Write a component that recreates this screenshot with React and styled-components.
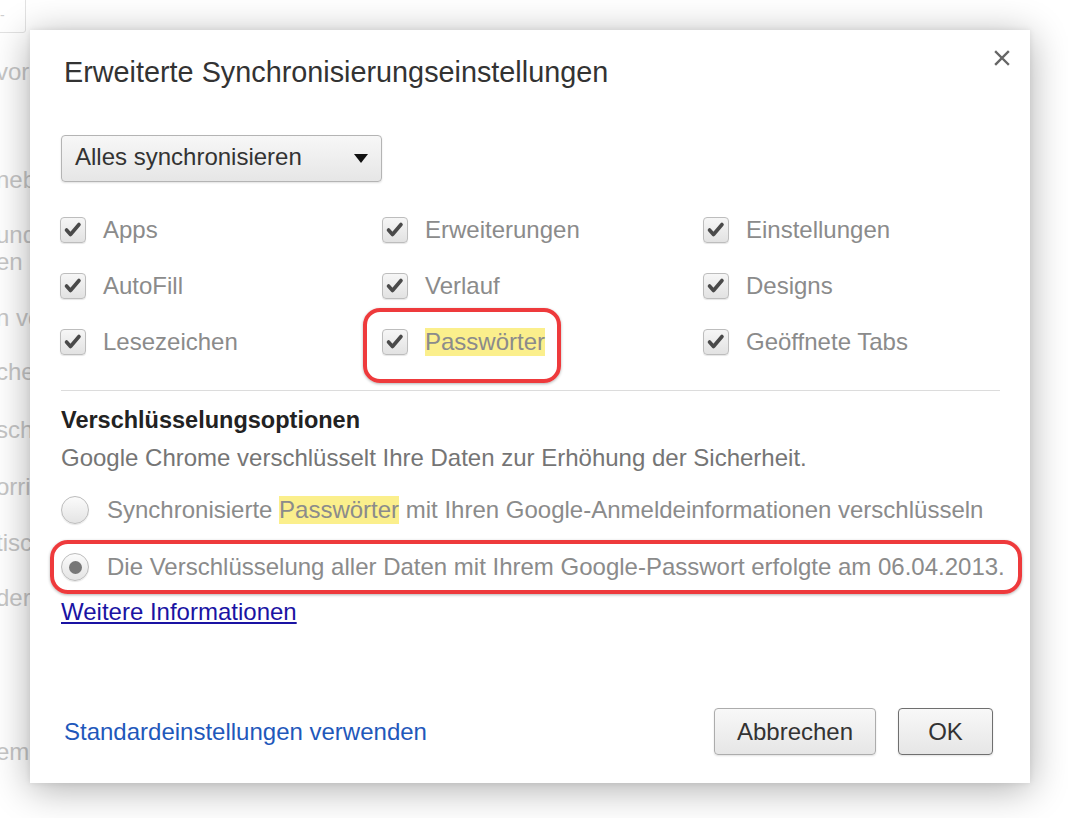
import React from "react";
import styled, { createGlobalStyle } from "styled-components";

const GlobalStyle = createGlobalStyle`
  html, body {
    margin: 0;
    padding: 0;
    background: #ffffff;
  }
  body {
    font-family: "Liberation Sans", Arial, sans-serif;
  }
`;

const backdropLines = [
  { text: "vor", gap: 58 },
  { text: "neb", gap: 80 },
  { text: "und", gap: 27 },
  { text: "en", gap: -1 },
  { text: "n vo", gap: 28 },
  { text: "che", gap: 26 },
  { text: "sch", gap: 30 },
  { text: "orri", gap: 29 },
  { text: "tisc", gap: 28 },
  { text: "deru", gap: 27 },
  { text: "em", gap: 126 },
];

const options = [
  "Apps",
  "Erweiterungen",
  "Einstellungen",
  "AutoFill",
  "Verlauf",
  "Designs",
  "Lesezeichen",
  "Passwörter",
  "Geöffnete Tabs",
];

export default function App() {
  return (
    <>
      <GlobalStyle />
      <Page>
        <Backdrop>
          <SearchStub>-</SearchStub>
          {backdropLines.map((line, i) => (
            <FadedLine key={i} $gap={line.gap}>
              {line.text}
            </FadedLine>
          ))}
        </Backdrop>

        <Dialog>
          <CloseButton aria-label="Schließen">
            <svg width="16" height="16" viewBox="0 0 16 16">
              <path
                d="M2 2 L14 14 M14 2 L2 14"
                stroke="#666"
                strokeWidth="2.4"
                strokeLinecap="square"
              />
            </svg>
          </CloseButton>

          <Title>Erweiterte Synchronisierungseinstellungen</Title>

          <Select>
            <span>Alles synchronisieren</span>
            <Caret />
          </Select>

          <OptionGrid>
            {options.map((name) => (
              <Option key={name} $marked={name === "Passwörter"}>
                <CheckBox>
                  <svg width="26" height="26" viewBox="0 0 26 26">
                    <polyline
                      points="6.5,13 10.5,17.5 19,7.5"
                      fill="none"
                      stroke="#4a4a4a"
                      strokeWidth="3.6"
                      strokeLinecap="round"
                      strokeLinejoin="round"
                    />
                  </svg>
                </CheckBox>
                <Label>
                  {name === "Passwörter" ? <Mark>{name}</Mark> : name}
                </Label>
              </Option>
            ))}
          </OptionGrid>

          <Divider />

          <SectionTitle>Verschlüsselungsoptionen</SectionTitle>
          <Description>
            Google Chrome verschlüsselt Ihre Daten zur Erhöhung der Sicherheit.
          </Description>

          <RadioRow>
            <Radio />
            <Label>
              Synchronisierte <Mark>Passwörter</Mark> mit Ihren
              Google-Anmeldeinformationen verschlüsseln
            </Label>
          </RadioRow>
          <RadioRow $marked>
            <Radio $checked />
            <Label>
              Die Verschlüsselung aller Daten mit Ihrem Google-Passwort erfolgte
              am 06.04.2013.
            </Label>
          </RadioRow>

          <MoreLink href="#">Weitere Informationen</MoreLink>

          <Footer>
            <ResetLink href="#">Standardeinstellungen verwenden</ResetLink>
            <Buttons>
              <Button $width={162}>Abbrechen</Button>
              <Button $width={95} $default>
                OK
              </Button>
            </Buttons>
          </Footer>
        </Dialog>
      </Page>
    </>
  );
}

const Page = styled.div`
  position: relative;
  width: 100vw;
  height: 100vh;
  overflow: hidden;
  background: #ffffff;
`;

const Backdrop = styled.div`
  display: flex;
  flex-direction: column;
  font-size: 24px;
  color: #c6c6c6;
`;

const SearchStub = styled.div`
  position: absolute;
  top: -1px;
  left: -1px;
  width: 25px;
  height: 32px;
  border: 1px solid #e2e2e2;
  border-radius: 0 0 3px 0;
  font-size: 14px;
  line-height: 30px;
  color: #cfcfcf;
`;

const FadedLine = styled.div`
  margin-top: ${(p) => p.$gap}px;
  margin-left: -4px;
  line-height: 28px;
  white-space: nowrap;
`;

const Dialog = styled.div`
  position: absolute;
  top: 30px;
  left: 30px;
  width: 1000px;
  height: 753px;
  box-sizing: border-box;
  padding: 26px 30px 28px 31px;
  display: flex;
  flex-direction: column;
  background: #ffffff;
  box-shadow: 0 6px 36px rgba(0, 0, 0, 0.32), 0 0 6px rgba(0, 0, 0, 0.08);
`;

const CloseButton = styled.div`
  position: absolute;
  top: 20px;
  right: 20px;
  width: 16px;
  height: 16px;
  svg {
    display: block;
  }
`;

const Title = styled.h1`
  margin: 0 0 0 3px;
  font-size: 28.8px;
  line-height: 32px;
  font-weight: normal;
  color: #333333;
`;

const Select = styled.div`
  margin-top: 47px;
  width: 321px;
  height: 47px;
  box-sizing: border-box;
  padding: 0 13px 3px 13px;
  display: flex;
  align-items: center;
  justify-content: space-between;
  border: 1px solid #b4b4b4;
  border-radius: 4px;
  background: linear-gradient(#f7f7f7, #e6e6e6);
  box-shadow: 0 1px 2px rgba(0, 0, 0, 0.12);
  font-size: 24px;
  line-height: 28px;
  color: #333333;
`;

const Caret = styled.div`
  margin-top: 2px;
  width: 0;
  height: 0;
  border-left: 7.5px solid transparent;
  border-right: 7.5px solid transparent;
  border-top: 9px solid #111111;
`;

const OptionGrid = styled.div`
  margin-top: 20px;
  display: grid;
  grid-template-columns: 322px 321px 1fr;
  grid-auto-rows: 56px;
`;

const Option = styled.div`
  position: relative;
  display: flex;
  align-items: center;
  gap: 17px;

  ${(p) =>
    p.$marked &&
    `
    &::after {
      content: "";
      position: absolute;
      top: -6px;
      bottom: -13px;
      left: -20px;
      width: 198px;
      border: 4px solid #ee3a3c;
      border-radius: 17px;
      box-sizing: border-box;
      box-shadow: 0 1px 3px rgba(0, 0, 0, 0.3);
    }
  `}
`;

const CheckBox = styled.div`
  width: 26px;
  height: 26px;
  box-sizing: border-box;
  flex-shrink: 0;
  margin-left: -1px;
  border: 1px solid #bdbdbd;
  border-radius: 4px;
  background: linear-gradient(#f6f6f6, #e2e2e2);
  box-shadow: 0 1px 1px rgba(0, 0, 0, 0.1);
  svg {
    display: block;
    margin: -1px;
  }
`;

const Label = styled.span`
  font-size: 24px;
  line-height: 28px;
  color: #8b8b8b;
  white-space: nowrap;
`;

const Mark = styled.span`
  background: #fbef8c;
  display: inline-block;
  line-height: 28px;
`;

const Divider = styled.div`
  margin-top: 20px;
  height: 1px;
  background: #dcdcdc;
`;

const SectionTitle = styled.h2`
  margin: 15px 0 0;
  font-size: 23.5px;
  line-height: 28px;
  font-weight: bold;
  color: #222222;
`;

const Description = styled.p`
  margin: 10px 0 0;
  font-size: 24px;
  line-height: 28px;
  color: #757575;
`;

const RadioRow = styled.div`
  position: relative;
  height: 56px;
  display: flex;
  align-items: center;
  gap: 18px;
  margin-top: ${(p) => (p.$marked ? "1px" : "10px")};

  ${(p) =>
    p.$marked &&
    `
    &::after {
      content: "";
      position: absolute;
      top: 1px;
      bottom: 1px;
      left: -11px;
      right: -22px;
      border: 4px solid #ee3a3c;
      border-radius: 18px;
      box-shadow: 0 1px 3px rgba(0, 0, 0, 0.3);
    }
  `}
`;

const Radio = styled.div`
  position: relative;
  width: 28px;
  height: 28px;
  box-sizing: border-box;
  flex-shrink: 0;
  border-radius: 50%;
  border: 1px solid #bcbcbc;
  background: linear-gradient(#fbfbfb, #e4e4e4);
  box-shadow: 0 1px 1px rgba(0, 0, 0, 0.1);

  ${(p) =>
    p.$checked &&
    `
    &::after {
      content: "";
      position: absolute;
      top: 6.5px;
      left: 6.5px;
      width: 13px;
      height: 13px;
      border-radius: 50%;
      background: #777777;
    }
  `}
`;

const MoreLink = styled.a`
  margin-top: 3px;
  align-self: flex-start;
  font-size: 24px;
  line-height: 28px;
  color: #1a13a3;
  text-decoration: underline;
  text-underline-offset: 2px;
`;

const Footer = styled.div`
  margin-top: auto;
  display: flex;
  align-items: center;
  justify-content: space-between;
  padding-right: 7px;
`;

const ResetLink = styled.a`
  margin-left: 3px;
  font-size: 24px;
  line-height: 28px;
  color: #1f58bb;
  text-decoration: none;
`;

const Buttons = styled.div`
  display: flex;
  gap: 22px;
`;

const Button = styled.button`
  width: ${(p) => p.$width}px;
  height: 47px;
  padding: 0;
  border: 1px solid ${(p) => (p.$default ? "#6f6f6f" : "#acacac")};
  border-radius: 4px;
  background: linear-gradient(#f8f8f8, #e6e6e6);
  box-shadow: 0 1px 2px rgba(0, 0, 0, 0.12);
  font-family: "Liberation Sans", Arial, sans-serif;
  font-size: 24px;
  color: #333333;
`;
